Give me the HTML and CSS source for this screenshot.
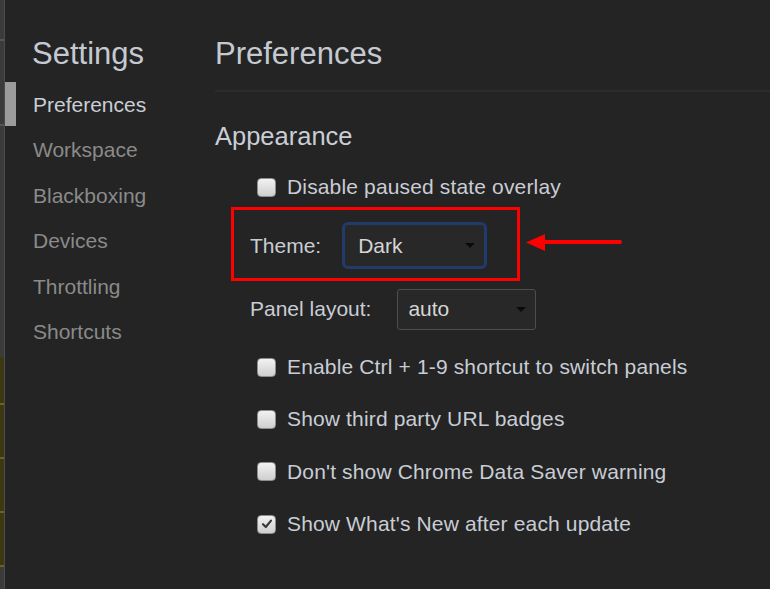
FILE: index.html
```html
<!DOCTYPE html>
<html lang="en">
<head>
<meta charset="utf-8">
<title>Settings</title>
<link rel="stylesheet" href="styles.css">
</head>
<body>
<div class="app">
  <div class="edge">
    <div class="edge-seg s1"></div>
    <div class="edge-line"></div>
    <div class="edge-seg s2"></div>
    <div class="edge-line"></div>
    <div class="edge-seg s3"></div>
    <div class="edge-yellow"></div>
    <div class="edge-yline"></div>
    <div class="edge-yellow y2"></div>
    <div class="edge-yline"></div>
    <div class="edge-yellow y2"></div>
    <div class="edge-yline"></div>
    <div class="edge-yellow y2"></div>
    <div class="edge-yline"></div>
    <div class="edge-seg s4"></div>
  </div>
  <nav class="sidebar">
    <h1 class="sidebar-title">Settings</h1>
    <ul class="nav">
      <li class="nav-item selected">Preferences</li>
      <li class="nav-item">Workspace</li>
      <li class="nav-item">Blackboxing</li>
      <li class="nav-item">Devices</li>
      <li class="nav-item">Throttling</li>
      <li class="nav-item">Shortcuts</li>
    </ul>
  </nav>
  <main class="main">
    <h2 class="page-title">Preferences</h2>
    <h3 class="section-title">Appearance</h3>

    <label class="check-row first">
      <span class="checkbox"></span>
      <span class="check-label">Disable paused state overlay</span>
    </label>

    <div class="theme-box">
      <span class="field-label">Theme:</span>
      <div class="select focused">
        <span class="select-value">Dark</span>
        <span class="caret"></span>
      </div>
    </div>

    <div class="select-row">
      <span class="field-label">Panel layout:</span>
      <div class="select plain">
        <span class="select-value">auto</span>
        <span class="caret"></span>
      </div>
    </div>

    <div class="check-list">
      <label class="check-row">
        <span class="checkbox"></span>
        <span class="check-label">Enable Ctrl + 1-9 shortcut to switch panels</span>
      </label>
      <label class="check-row">
        <span class="checkbox"></span>
        <span class="check-label">Show third party URL badges</span>
      </label>
      <label class="check-row">
        <span class="checkbox"></span>
        <span class="check-label">Don't show Chrome Data Saver warning</span>
      </label>
      <label class="check-row">
        <span class="checkbox checked">
          <svg width="12" height="12" viewBox="0 0 12 12"><path d="M2 6.2 L4.8 9 L10 2.6" fill="none" stroke="#3a3a3a" stroke-width="2.2" stroke-linecap="round" stroke-linejoin="round"/></svg>
        </span>
        <span class="check-label">Show What's New after each update</span>
      </label>
    </div>
  </main>

  <svg class="annot-arrow" width="100" height="20" viewBox="0 0 100 20">
    <polygon points="0,9.5 19,1 19,18" fill="#fe0000"/>
    <line x1="17" y1="9" x2="94" y2="9" stroke="#fe0000" stroke-width="4" stroke-linecap="round"/>
  </svg>
</div>
</body>
</html>
```
FILE: styles.css
```css
* { box-sizing: border-box; }
html, body {
  margin: 0;
  padding: 0;
  background: #242424;
}
body {
  font-family: "Liberation Sans", Arial, Helvetica, sans-serif;
  width: 770px;
  height: 589px;
  overflow: hidden;
}
.app {
  position: relative;
  display: flex;
  width: 770px;
  height: 589px;
  background: #242424;
}

/* left edge strip */
.edge {
  width: 5px;
  flex: none;
  display: flex;
  flex-direction: column;
  border-right: 1px solid #4b4b4b;
}
.edge-seg { background: #3b3b3b; }
.edge-seg.s1 { height: 39px; }
.edge-seg.s2 { height: 83px; }
.edge-seg.s3 { height: 231px; }
.edge-seg.s4 { flex: 1; }
.edge-line { height: 2px; background: #555; }
.edge-yellow { height: 46px; background: #3c3812; }
.edge-yellow.y2 { height: 52px; }
.edge-yline { height: 2px; background: #6b6320; }

/* sidebar */
.sidebar {
  width: 210px;
  flex: none;
  padding-left: 27px;
}
.sidebar-title {
  margin: 38px 0 13px 0;
  font-size: 31px;
  line-height: 31px;
  font-weight: normal;
  color: #c5cad2;
}
.nav {
  list-style: none;
  margin: 0 0 0 -27px;
  padding: 0;
}
.nav-item {
  height: 45.5px;
  display: flex;
  align-items: center;
  padding-left: 28px;
  font-size: 21px;
  color: #8a8a8a;
}
.nav-item.selected {
  color: #c9ced6;
  background: linear-gradient(to right, #9c9c9c 11px, transparent 11px) no-repeat 0 0 / 100% 44px;
}

/* main */
.main {
  flex: 1;
  display: flex;
  flex-direction: column;
  align-items: flex-start;
}
.page-title {
  align-self: stretch;
  margin: 38px 0 0 0;
  padding-bottom: 21px;
  border-bottom: 2px solid #2c2c2c;
  font-size: 31px;
  line-height: 31px;
  font-weight: normal;
  color: #c5cad2;
}
.section-title {
  margin: 29px 0 0 0;
  height: 30px;
  line-height: 30px;
  font-size: 25.5px;
  font-weight: normal;
  color: #c9ced6;
}

.check-row {
  display: flex;
  align-items: center;
  height: 52.3px;
  padding-left: 42px;
}
.check-row.first {
  height: 40px;
  margin-top: 16px;
}
.checkbox {
  width: 19px;
  height: 19px;
  flex: none;
  border: 1px solid #8d8d8d;
  border-radius: 4px;
  background: linear-gradient(#f2f2f2, #cfcfcf);
  display: flex;
  align-items: center;
  justify-content: center;
}
.check-label {
  margin-left: 11px;
  font-size: 21px;
  letter-spacing: 0.15px;
  color: #c8cdd5;
  white-space: nowrap;
}

.field-label {
  font-size: 21px;
  color: #c8cdd5;
  white-space: nowrap;
}

.theme-box {
  display: flex;
  align-items: center;
  width: 289px;
  height: 74px;
  margin-left: 16px;
  border: 3px solid #fe0000;
  padding: 3px 0 0 16px;
}
.theme-box .field-label { margin-right: 21px; }

.select-row {
  display: flex;
  align-items: center;
  height: 58px;
  padding-left: 35px;
  padding-bottom: 2px;
}
.select-row .field-label { margin-right: 26px; }

.select {
  display: flex;
  align-items: center;
  justify-content: space-between;
  background: #282828;
}
.select.focused {
  width: 145px;
  height: 47px;
  border: 3px solid #213c6c;
  border-radius: 6px;
  padding: 0 9px 0 13px;
}
.select.plain {
  width: 139px;
  height: 41px;
  border: 1px solid #4d4d4d;
  border-radius: 3px;
  padding: 0 9px 0 10px;
}
.select-value {
  font-size: 21px;
  color: #d6d6d6;
}
.caret {
  width: 0;
  height: 0;
  border-left: 5px solid transparent;
  border-right: 5px solid transparent;
  border-top: 5px solid #0a0a0a;
}

.check-list {
  margin-top: 2px;
  display: flex;
  flex-direction: column;
}

/* annotation arrow overlaid on the page */
.annot-arrow {
  position: absolute;
  left: 526px;
  top: 233px;
}
```
